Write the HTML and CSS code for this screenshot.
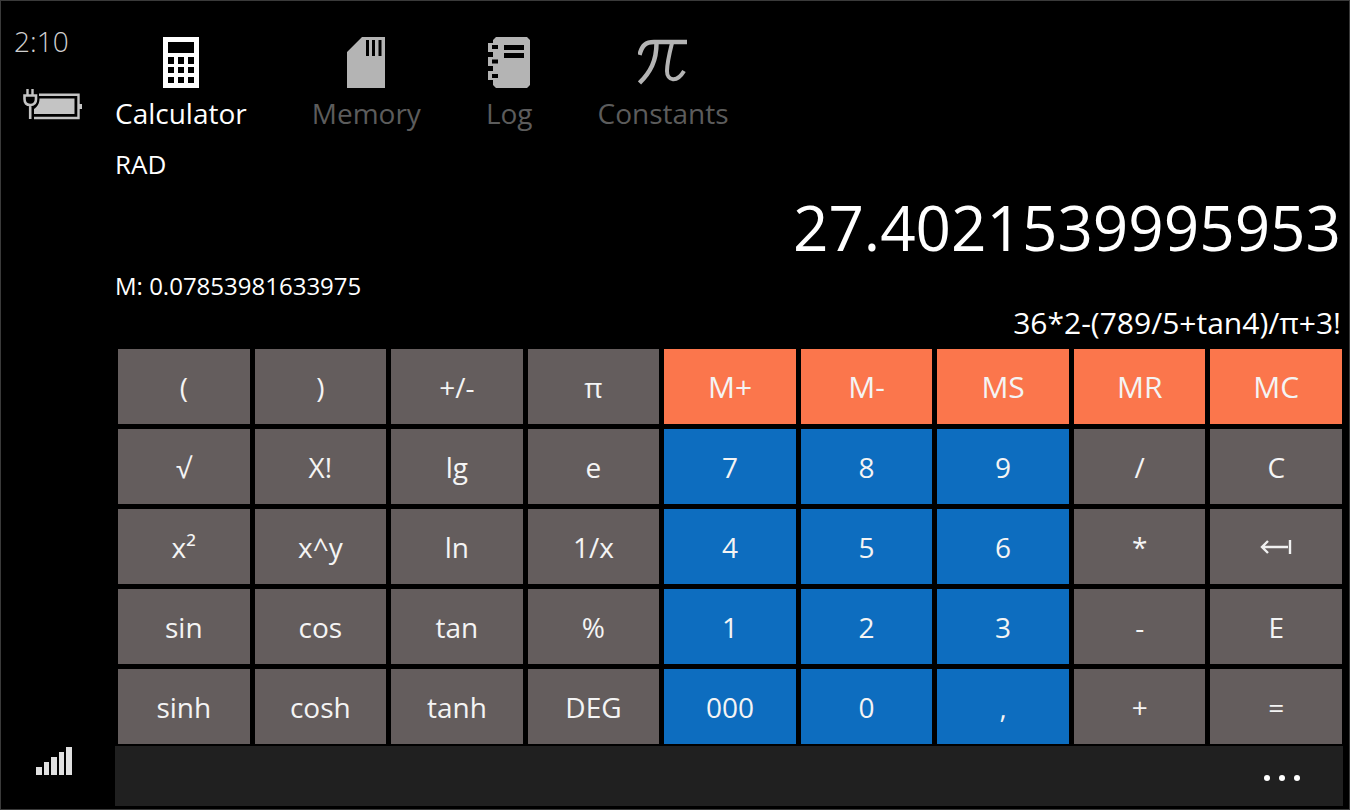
FILE: index.html
```html
<!DOCTYPE html>
<html lang="en">
<head>
    <meta charset="UTF-8">
    <title>Calculator</title>
    <link rel="stylesheet" href="styles.css">
</head>
<body>

<div class="phone">
    <!-- status column -->
    <div class="status">
        <div class="status-top">
            <span class="clock">2:10</span>
            <svg class="battery" width="60" height="34" viewBox="0 0 60 34">
                <path d="M5.5 2v6M10.5 2v6" fill="none" stroke="#c4c4c4" stroke-width="2.4"/>
                <path d="M2.5 8.5h11.5v3.5c0 4-2 6-5.8 6s-5.7-2-5.7-6zM8.2 18v14" fill="none" stroke="#c4c4c4" stroke-width="2.6"/>
                <path d="M17 7.7h39.500v23.300H12" fill="none" stroke="#c4c4c4" stroke-width="2.4"/>
                <path d="M17.5 11.5h35v15.500H12v-5c3-2 5.5-5 5.5-10.5z" fill="#c4c4c4"/>
                <path d="M56 17h4v5h-4z" fill="#c4c4c4"/>
            </svg>
        </div>
        <svg class="signal" width="37" height="28" viewBox="0 0 37 28">
            <path d="M0 20h6v8H0zM8 15h5v13H8zM15 10h6v18h-6zM23 5h5v23h-5zM30 0h6v28h-6z" fill="#e0e0e0"/>
        </svg>
    </div>

    <div class="main">
        <div class="tabs">
            <button class="tab current">
                <svg width="36" height="52" viewBox="0 0 36 52">
                    <path fill="#fff" fill-rule="evenodd" d="M0 0h36v51H0zM5 5v11h26V5zM5 20v7h6v-7zM15 20v7h6v-7zM25 20v7h6v-7zM5 30v6h6v-6zM15 30v6h6v-6zM25 30v6h6v-6zM5 40v6h6v-6zM15 40v6h6v-6zM25 40v6h6v-6z"/>
                </svg>
                <span>Calculator</span>
            </button>
            <button class="tab">
                <svg width="38" height="52" viewBox="0 0 38 52">
                    <path fill="#b4b4b4" fill-rule="evenodd" d="M15 0h23v51H0V15zM19 3v16h3V3zM25 3v16h3V3zM31.5 3v16h3V3z"/>
                </svg>
                <span>Memory</span>
            </button>
            <button class="tab">
                <svg width="42" height="52" viewBox="0 0 42 52">
                    <path fill="#b4b4b4" fill-rule="evenodd" d="M8 0h31l3 3v45l-3 3H8l-3-3v-5H0v-9h5v-5H0v-9h5v-5H0V6h5V3zM16 8v5h20V8zM16 16v5h20v-5zM4 8v4h6V8zM4 22.5v4h6v-4zM4 37v4h6v-4z"/>
                </svg>
                <span>Log</span>
            </button>
            <button class="tab">
                <svg width="50" height="52" viewBox="0 0 50 52">
                    <g fill="none" stroke="#b4b4b4">
                        <path d="M1.5 18C4 8 8 5 16 5h33" stroke-width="4.5"/>
                        <path d="M18.500 6c0 18-6 29-17 40" stroke-width="4.5"/>
                        <path d="M34 6C31 18 29 27 29 34c0 10 10 12 17 0" stroke-width="4"/>
                    </g>
                </svg>
                <span>Constants</span>
            </button>
        </div>

        <div class="display">
            <div class="mode">RAD</div>
            <div class="result">27.4021539995953</div>
            <div class="memory">M: 0.07853981633975</div>
            <div class="expression">36*2-(789/5+tan4)/π+3!</div>
        </div>

        <div class="keys">
            <button class="key">(</button>
            <button class="key">)</button>
            <button class="key">+/-</button>
            <button class="key">π</button>
            <button class="key mem">M+</button>
            <button class="key mem">M-</button>
            <button class="key mem">MS</button>
            <button class="key mem">MR</button>
            <button class="key mem">MC</button>

            <button class="key">√</button>
            <button class="key">X!</button>
            <button class="key">lg</button>
            <button class="key">e</button>
            <button class="key num">7</button>
            <button class="key num">8</button>
            <button class="key num">9</button>
            <button class="key">/</button>
            <button class="key">C</button>

            <button class="key">x²</button>
            <button class="key">x^y</button>
            <button class="key">ln</button>
            <button class="key">1/x</button>
            <button class="key num">4</button>
            <button class="key num">5</button>
            <button class="key num">6</button>
            <button class="key">*</button>
            <button class="key" aria-label="Backspace">
                <svg width="32" height="16" viewBox="0 0 32 16">
                    <path d="M8 2L2 8l6 6M2 8h26M30 1v14" fill="none" stroke="#f0f0f0" stroke-width="2.4"/>
                </svg>
            </button>

            <button class="key">sin</button>
            <button class="key">cos</button>
            <button class="key">tan</button>
            <button class="key">%</button>
            <button class="key num">1</button>
            <button class="key num">2</button>
            <button class="key num">3</button>
            <button class="key">-</button>
            <button class="key">E</button>

            <button class="key">sinh</button>
            <button class="key">cosh</button>
            <button class="key">tanh</button>
            <button class="key">DEG</button>
            <button class="key num">000</button>
            <button class="key num">0</button>
            <button class="key num">,</button>
            <button class="key">+</button>
            <button class="key">=</button>
        </div>

        <div class="appbar">
            <button class="more" aria-label="More">
                <svg width="38" height="6" viewBox="0 0 38 6">
                    <circle cx="4" cy="3" r="3" fill="#fff"/>
                    <circle cx="19" cy="3" r="3" fill="#fff"/>
                    <circle cx="34" cy="3" r="3" fill="#fff"/>
                </svg>
            </button>
        </div>
    </div>
</div>

</body>
</html>
```
FILE: styles.css
```css
* {
    margin: 0;
    padding: 0;
    box-sizing: border-box;
}

body {
    background-color: #000;
    color: #fff;
    font-family: "Open Sans", "Noto Sans", sans-serif;
}

button {
    border: none;
    background: none;
    color: inherit;
    font-family: inherit;
    cursor: pointer;
}

svg {
    display: block;
}

.phone {
    display: flex;
    min-height: 100vh;
    border: 1px solid #3a3a3a;
}

/* left column with clock, battery and signal */
.status {
    width: 114px;
    padding: 20px 0 34px 13px;
    display: flex;
    flex-direction: column;
    justify-content: space-between;
}

.clock {
    display: block;
    font-size: 28px;
    line-height: 40px;
    font-weight: 300;
    color: #d0d0d0;
}

.battery {
    margin: 26px 0 0 8px;
}

.signal {
    margin-left: 22px;
}

.main {
    flex: 1;
    display: flex;
    flex-direction: column;
    padding: 36px 6px 3px 0;
}

.tabs {
    display: flex;
    gap: 65px;
}

.tab {
    display: flex;
    flex-direction: column;
    align-items: center;
    font-size: 28px;
    line-height: 40px;
    color: #5c5c5c;
}

.tab svg {
    margin-bottom: 4px;
}

.tab.current {
    color: #fff;
}

/* readout */
.display {
    display: flex;
    flex-direction: column;
    padding-right: 2px;
}

.mode {
    font-size: 26px;
    line-height: 34px;
    margin-top: 14px;
}

.result {
    font-size: 62px;
    line-height: 84px;
    text-align: right;
    margin-top: 4px;
}

.memory {
    font-size: 24px;
    line-height: 34px;
}

.expression {
    font-size: 30px;
    line-height: 40px;
    text-align: right;
}

.keys {
    flex: 1;
    display: grid;
    grid-template-columns: repeat(9, 1fr);
    grid-auto-rows: 1fr;
    gap: 5px;
    padding: 6px 1px 2px 3px;
}

.key {
    display: flex;
    align-items: center;
    justify-content: center;
    background-color: #645d5d;
    font-size: 28px;
    line-height: 40px;
    color: #f4f4f4;
}

.key.mem {
    background-color: #fb764c;
    font-size: 30px;
}

.key.num {
    background-color: #0d6dbf;
}

.appbar {
    height: 60px;
    display: flex;
    align-items: center;
    justify-content: flex-end;
    padding-right: 36px;
    background-color: #202020;
}

.more {
    padding: 8px 6px 4px;
}
```
